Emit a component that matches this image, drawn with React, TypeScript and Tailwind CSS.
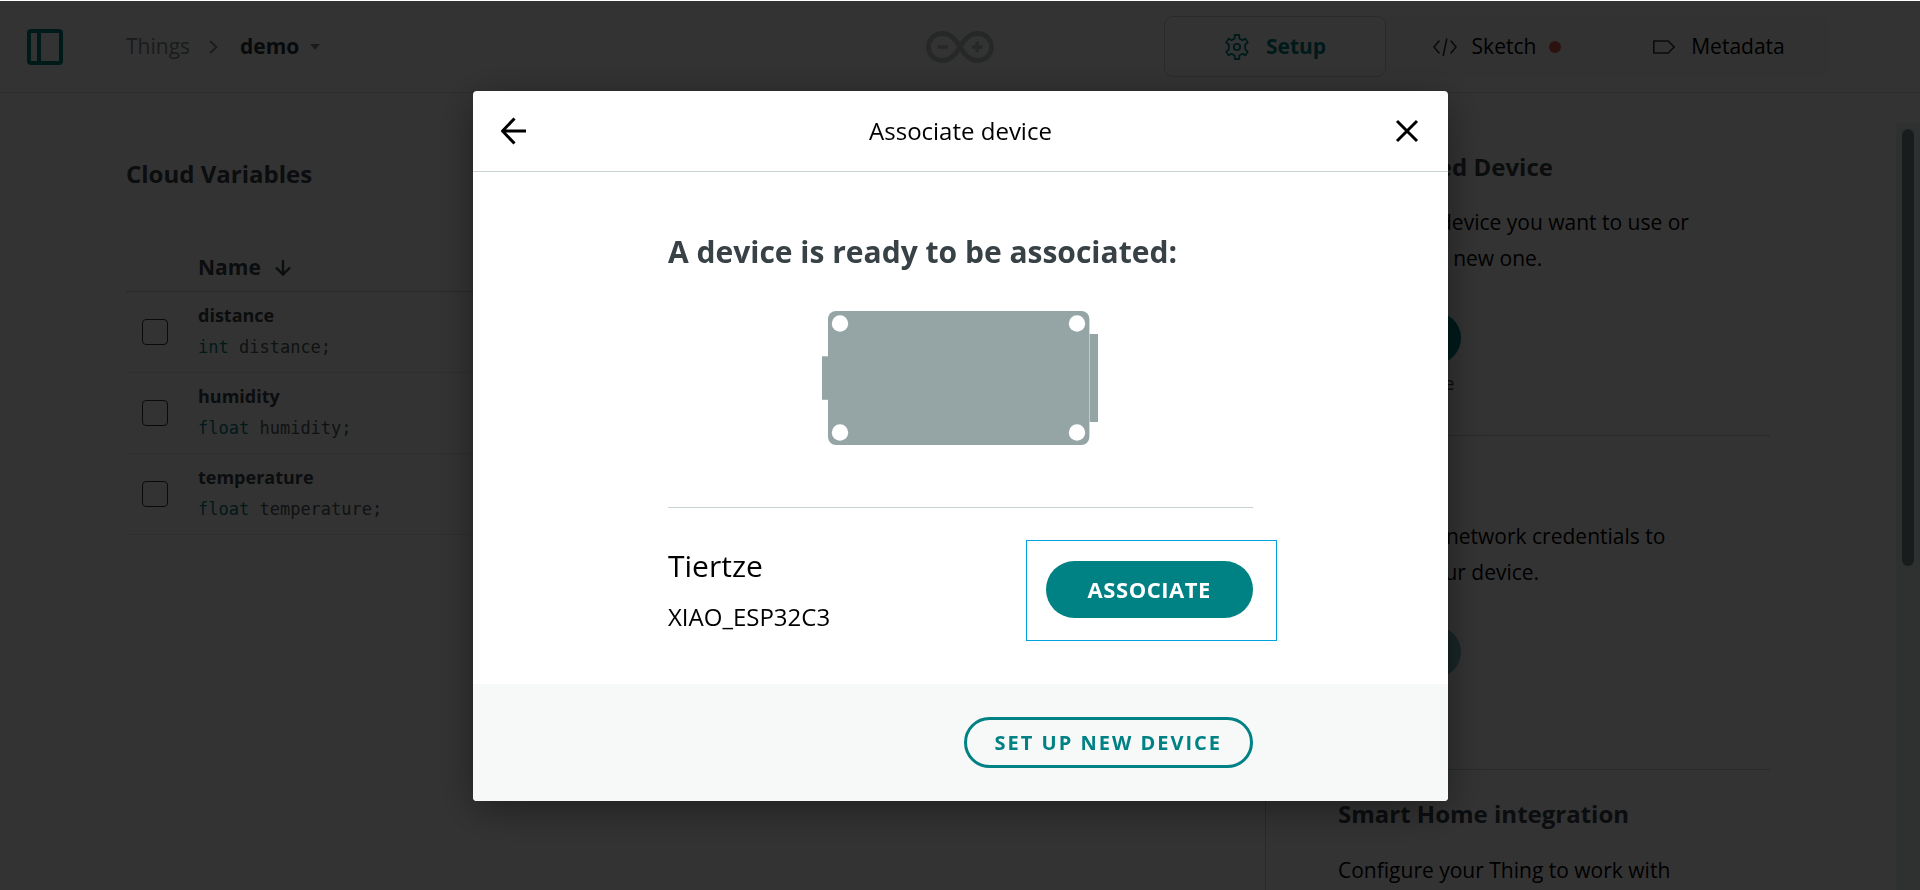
import React from 'react';

type Variable = { name: string; type: string };

const variables: Variable[] = [
  { name: 'distance', type: 'int' },
  { name: 'humidity', type: 'float' },
  { name: 'temperature', type: 'float' },
];

function SidebarIcon() {
  return (
    <svg width="36" height="36" viewBox="0 0 36 36" fill="none" stroke="#008184" strokeWidth="4" aria-hidden="true">
      <rect x="2" y="2" width="32" height="32" rx="2" />
      <path d="M12 2v32" />
    </svg>
  );
}

function ArduinoLogo() {
  return (
    <svg width="68" height="32" viewBox="0 0 68 32" fill="none" stroke="#bec9c9" strokeWidth="4.8" aria-label="Arduino">
      <path d="M34 16C29.500 8 24.500 2.500 16.500 2.500C8.500 2.500 2.500 8.500 2.500 16S8.500 29.500 16.500 29.500C24.500 29.500 29.500 24 34 16C38.500 8 43.500 2.500 51.500 2.500C59.500 2.500 65.500 8.500 65.500 16S59.500 29.500 51.500 29.500C43.500 29.500 38.500 24 34 16Z" />
      <path d="M11.500 16h10.500M46 16h10.500M51.200 10.800v10.500" strokeWidth="3.600" />
    </svg>
  );
}

function GearIcon() {
  return (
    <svg width="26" height="26" viewBox="0 0 26 26" fill="none" stroke="currentColor" strokeWidth="1.800" strokeLinejoin="round" aria-hidden="true">
      <path d="M10.700 1h4.600v3.500l3.200 1.800 3-1.700 2.300 4-2.600 1.800v5.200l2.600 1.800-2.300 4-3-1.700-3.200 1.800V25h-4.600v-3.500l-3.200-1.800-3 1.700-2.300-4 2.600-1.800v-5.200L2.200 8.600l2.300-4 3 1.700 3.200-1.800z" />
      <circle cx="13" cy="13" r="3.200" />
    </svg>
  );
}

function CodeIcon() {
  return (
    <svg width="24" height="20" viewBox="0 0 24 20" fill="none" stroke="#2c353a" strokeWidth="1.600" strokeLinecap="round" strokeLinejoin="round" aria-hidden="true">
      <path d="M6 4L1 10l5 6M18 4l5 6-5 6M13.700 2L10.300 18.500" />
    </svg>
  );
}

function TagIcon() {
  return (
    <svg width="22" height="14" viewBox="0 0 22 14" fill="none" stroke="#2c353a" strokeWidth="1.600" strokeLinejoin="round" aria-hidden="true">
      <path d="M.8 1h14.400l6 6-6 6H.8z" />
    </svg>
  );
}

function Board() {
  return (
    <svg width="276" height="134" viewBox="0 0 276 134" role="img" aria-label="Board">
      <g fill="#95a5a6">
        <rect x="0" y="45.300" width="8" height="43.500" />
        <rect x="6" y="0" width="261.400" height="134" rx="8" />
        <rect x="267.700" y="23" width="8.300" height="88" />
      </g>
      <g fill="#fff">
        <circle cx="18" cy="12.500" r="8.200" />
        <circle cx="255" cy="12.500" r="8.200" />
        <circle cx="18" cy="121.500" r="8.200" />
        <circle cx="255" cy="121.500" r="8.200" />
      </g>
    </svg>
  );
}

function TopBar() {
  return (
    <header className="grid h-[93px] shrink-0 grid-cols-[1fr_auto_1fr] items-center border-b border-[#dae3e3] pt-px">
      <div className="flex items-center pl-[27px]">
        <button aria-label="Toggle sidebar">
          <SidebarIcon />
        </button>
        <nav aria-label="Breadcrumb" className="ml-[63px] flex items-center text-[21px]">
          <a href="#things" className="text-[#7f8c8d]">Things</a>
          <svg width="9" height="14" viewBox="0 0 9 14" fill="none" stroke="#7f8c8d" strokeWidth="1.800" className="mr-[22px] ml-[19px]" aria-hidden="true">
            <path d="M1 1l6.500 6L1 13" />
          </svg>
          <button className="flex items-center gap-[11px] font-bold text-[#2c353a]">
            demo
            <svg width="10" height="6" viewBox="0 0 10 6" fill="#7f8c8d" aria-hidden="true">
              <path d="M0 0h10L5 6z" />
            </svg>
          </button>
        </nav>
      </div>
      <ArduinoLogo />
      <div className="flex justify-end pr-[90px]">
        <div className="flex h-[61px] rounded-[9px] bg-[#f7f9f9] text-[21px]">
          <button className="flex w-[222px] items-center justify-center gap-4 rounded-[9px] border border-[#c9d2d2] bg-white font-bold text-[#008184]">
            <GearIcon />
            Setup
          </button>
          <button className="flex w-[222px] items-center justify-center">
            <CodeIcon />
            <span className="mr-[13px] ml-[15px]">Sketch</span>
            <span className="size-3 rounded-full bg-[#da5b4a]" />
          </button>
          <button className="flex w-[222px] items-center justify-center gap-4">
            <TagIcon />
            Metadata
          </button>
        </div>
      </div>
    </header>
  );
}

function VariablesTable() {
  return (
    <main className="min-w-0 flex-1 pt-[63px] pr-12 pl-[126px]">
      <h2 className="text-[24px] leading-9 font-bold text-[#374146]">Cloud Variables</h2>
      <table className="mt-[49px] w-full border-collapse text-left">
        <thead>
          <tr className="h-[50px] border-b border-[#c9d2d2]">
            <th className="w-[72px]" aria-label="Selection" />
            <th className="pt-1 text-[21px] font-bold text-[#374146]">
              <button className="flex items-center gap-[14px]">
                Name
                <svg width="16" height="16" viewBox="0 0 16 16" fill="none" stroke="currentColor" strokeWidth="2.400" aria-hidden="true">
                  <path d="M8 0v14M1 7.500l7 7 7-7" />
                </svg>
              </button>
            </th>
          </tr>
        </thead>
        <tbody>
          {variables.map((v) => (
            <tr key={v.name} className="h-[81px] border-b border-[#e4eaea]">
              <td className="pl-4 align-middle">
                <input
                  id={v.name}
                  type="checkbox"
                  className="block size-[26px] appearance-none rounded-[4px] border border-[#2c353a]"
                />
              </td>
              <td className="pb-[2px] align-middle">
                <label htmlFor={v.name} className="block text-[18px] leading-8 font-bold text-[#374146]">
                  {v.name}
                </label>
                <code className="block font-['DejaVu_Sans_Mono',monospace] text-[17px] leading-8 text-[#4e5b61]">
                  <span className="text-[#008184]">{v.type}</span> {v.name};
                </code>
              </td>
            </tr>
          ))}
        </tbody>
      </table>
    </main>
  );
}

function LinkIcon() {
  return (
    <svg width="26" height="26" viewBox="0 0 24 24" fill="none" stroke="#fff" strokeWidth="2" aria-hidden="true">
      <path d="M10 14a4 4 0 0 0 6 0l3-3a4 4 0 0 0-6-6l-1 1M14 10a4 4 0 0 0-6 0l-3 3a4 4 0 0 0 6 6l1-1" />
    </svg>
  );
}

function SidePanel() {
  return (
    <aside className="flex w-[655px] shrink-0 border-l border-[#c9d2d2]">
      <div className="flex-1 pr-[126px] pl-[72px] text-[21px] leading-9">
        <section className="h-[343px] border-b border-[#c9d2d2] pt-14">
          <h2 className="text-[24px] font-bold text-[#374146]">Associated Device</h2>
          <p className="mt-[19px]">
            Select the device you want to use or
            <br />
            configure a new one.
          </p>
          <div className="mt-9 flex w-[123px] flex-col items-center">
            <button aria-label="Select Device" className="flex h-[52px] w-full items-center justify-center rounded-full bg-[#008184]">
              <LinkIcon />
            </button>
            <span className="mt-px text-[18px] whitespace-nowrap text-[#2c353a]">Select Device</span>
          </div>
        </section>
        <section className="h-[334px] border-b border-[#c9d2d2] pt-[26px]">
          <h2 className="text-[24px] font-bold text-[#374146]">Network</h2>
          <p className="mt-5">
            Enter your network credentials to
            <br />
            connect your device.
          </p>
          <div className="mt-9 flex w-[123px] flex-col items-center">
            <button aria-label="Configure network" disabled className="flex h-[52px] w-full items-center justify-center rounded-full bg-[#7fb8ba]">
              <LinkIcon />
            </button>
          </div>
        </section>
        <section className="pt-[26px]">
          <h2 className="text-[24px] font-bold text-[#374146]">Smart Home integration</h2>
          <p className="mt-5">Configure your Thing to work with</p>
        </section>
      </div>
      <div className="mt-[30px] w-6 bg-[#ecf1f1] px-[6px] pt-[6px]">
        <div className="h-[437px] rounded-full bg-[#7f8c8d]" />
      </div>
    </aside>
  );
}

function AssociateDialog() {
  return (
    <div className="fixed inset-x-0 top-px bottom-0 flex items-center justify-center bg-black/80 pt-px pl-px">
      <div
        role="dialog"
        aria-modal="true"
        aria-labelledby="dialog-title"
        className="w-[975px] max-w-full overflow-hidden rounded-[4px] bg-white shadow-[0_8px_40px_rgba(0,0,0,0.4)]"
      >
        <div className="flex h-[81px] items-center justify-between border-b border-[#c9d2d2] px-7">
          <button aria-label="Back">
            <svg width="26" height="28" viewBox="0 0 26 28" fill="none" stroke="#000" strokeWidth="3" aria-hidden="true">
              <path d="M25 14H2M13.500 1.500L1.500 14l12 12.500" />
            </svg>
          </button>
          <h1 id="dialog-title" className="text-[24px]">Associate device</h1>
          <button aria-label="Close">
            <svg width="26" height="26" viewBox="0 0 26 26" fill="none" stroke="#000" strokeWidth="3" aria-hidden="true">
              <path d="M3 3l20 20M23 3L3 23" />
            </svg>
          </button>
        </div>
        <div className="mx-auto w-3/5 pt-[60px] pb-[42px]">
          <h2 className="text-[30px] leading-10 font-bold text-[#374146]">A device is ready to be associated:</h2>
          <div className="flex justify-center border-b border-[#c9d2d2] pt-[39px] pr-[2px] pb-[62px]">
            <Board />
          </div>
          <div className="flex items-start justify-between pt-8">
            <div>
              <p className="text-[30px] leading-[52px]">Tiertze</p>
              <p className="text-[24px] leading-[50px]">XIAO_ESP32C3</p>
            </div>
            <div className="relative mt-[21px]">
              <button className="block h-[57px] rounded-full bg-[#008184] px-[42px] text-[22px] font-bold tracking-wide text-white">
                ASSOCIATE
              </button>
              <div className="pointer-events-none absolute -top-[21px] -right-6 -bottom-[23px] -left-5 border border-[#00a3e0]" />
            </div>
          </div>
        </div>
        <div className="bg-[#f7f9f9] py-[33px]">
          <div className="mx-auto flex w-3/5 justify-end">
            <button className="h-[51px] rounded-full border-3 border-[#008184] px-7 text-[20px] font-bold tracking-widest text-[#008184]">
              SET UP NEW DEVICE
            </button>
          </div>
        </div>
      </div>
    </div>
  );
}

export default function App() {
  return (
    <div className="flex h-screen flex-col overflow-hidden bg-white font-['Open_Sans','Noto_Sans',sans-serif] text-black">
      <TopBar />
      <div className="flex min-h-0 flex-1">
        <VariablesTable />
        <SidePanel />
      </div>
      <AssociateDialog />
    </div>
  );
}
